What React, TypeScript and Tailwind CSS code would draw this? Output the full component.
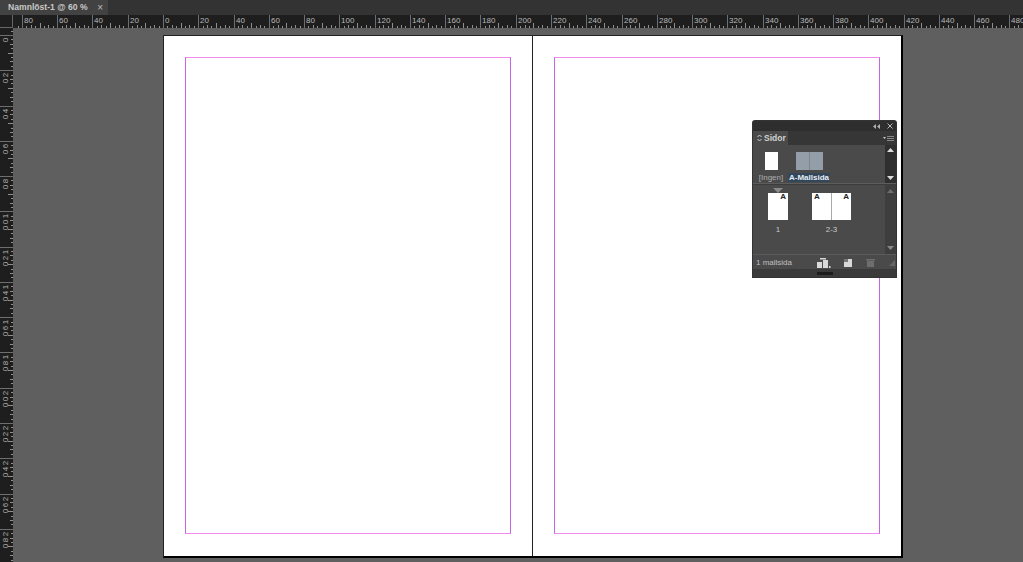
import React from "react";

const SCALE = 1.7635;
const H_ZERO = 163 - 13;
const V_ZERO = 35 - 28;

function tickLength(u: number) {
  if (u % 20 === 0) return 13;
  if (u % 10 === 0) return 5;
  if (u % 5 === 0) return 3;
  return 2;
}

function HorizontalRuler() {
  const ticks = [];
  for (let u = -82.5; u <= 490; u += 2.5) {
    const x = Math.round(H_ZERO + u * SCALE) + 0.5;
    const len = tickLength(u);
    ticks.push(<line key={u} x1={x} x2={x} y1={13 - len} y2={13} stroke={len === 13 ? "#6e6e6e" : "#8f8f8f"} />);
  }
  const labels = [];
  for (let u = -80; u <= 480; u += 20) {
    const x = Math.round(H_ZERO + u * SCALE) + 2;
    labels.push(
      <text key={u} x={x} y={8} fontSize={8} fill="#b8b8b8" fontFamily="Liberation Sans, sans-serif">
        {Math.abs(u)}
      </text>,
    );
  }
  return (
    <svg width={1010} height={13} className="block">
      {ticks}
      {labels}
    </svg>
  );
}

function VerticalRuler() {
  const ticks = [];
  for (let u = -2.5; u <= 300; u += 2.5) {
    const y = Math.round(V_ZERO + u * SCALE) + 0.5;
    const len = tickLength(u);
    ticks.push(<line key={u} y1={y} y2={y} x1={13 - len} x2={13} stroke={len === 13 ? "#6e6e6e" : "#8f8f8f"} />);
  }
  const labels = [];
  for (let u = 0; u <= 280; u += 20) {
    const y = Math.round(V_ZERO + u * SCALE);
    String(u)
      .split("")
      .forEach((d, i) => {
        const cy = y + 5 + i * 6;
        labels.push(
          <text
            key={`${u}-${i}`}
            x={4.500}
            y={cy + 3}
            fontSize={8}
            fontWeight={400}
            fill="#b0b0b0"
            textAnchor="middle"
            fontFamily="Liberation Sans, sans-serif"
            transform={`rotate(-90 4.500 ${cy})`}
          >
            {d}
          </text>,
        );
      });
  }
  return (
    <svg width={13} height={534} className="block">
      {ticks}
      {labels}
    </svg>
  );
}

function PageSheet({ className }: { className: string }) {
  return (
    <div className={`h-full ${className}`}>
      <div className="h-[477px] w-[326px] border border-x-[#c266e6] border-y-[#f08cf0]" />
    </div>
  );
}

function MiniPage({ letter, side, width }: { letter: string; side: "left" | "right"; width: string }) {
  return (
    <div className={`flex h-[27px] ${width} bg-white px-[2px] ${side === "right" ? "justify-end" : "justify-start"}`}>
      <span className="-mt-[1px] text-[8px] font-bold leading-[9px] text-[#222]">{letter}</span>
    </div>
  );
}

function PagesPanel() {
  return (
    <div className="absolute left-[753px] top-[121px] flex h-[156px] w-[143px] flex-col rounded-t-[2px] bg-[#4a4a4a] text-[#d0d0d0] shadow-[0_0_0_1px_#333]">
      <div className="flex h-[10px] items-center justify-end gap-[7px] bg-[#2e2e2e] pr-[3px]">
        <svg width="7" height="5" viewBox="0 0 7 5" fill="#b0b0b0">
          <path d="M3 0v5L0 2.500zM7 0v5L4 2.500z" />
        </svg>
        <svg width="6" height="6" viewBox="0 0 6 6" stroke="#b8b8b8" strokeWidth="1">
          <path d="M0.500 0.500 5.500 5.500M5.500 0.500 0.500 5.500" />
        </svg>
      </div>
      <div className="flex h-[14px] bg-[#363636]">
        <div className="flex w-[35px] items-center gap-[2px] bg-[#4a4a4a] pl-[4px] text-[8.500px] font-bold leading-none">
          <svg width="5" height="8" viewBox="0 0 5 8" fill="none" stroke="#d0d0d0">
            <path d="M0.500 3 2.500 1 4.500 3M0.500 5 2.500 7 4.500 5" />
          </svg>
          <span>Sidor</span>
        </div>
        <div className="ml-auto flex items-center gap-[1px] pr-[2px]">
          <svg width="3" height="3" viewBox="0 0 3 3" fill="#ccc">
            <path d="M0 0h3L1.500 2z" />
          </svg>
          <svg width="7" height="7" viewBox="0 0 7 7" stroke="#888">
            <path d="M0 1.500h7M0 3.500h7M0 5.500h7" />
          </svg>
        </div>
      </div>
      <div className="flex h-[38px]">
        <div className="flex flex-1 pl-[5px] pt-[7px]">
          <div className="flex w-[26px] flex-col items-center">
            <div className="h-[18px] w-[13px] bg-white" />
            <span className="mt-[3px] whitespace-nowrap text-[8px] leading-[9px] text-[#b0b0b0]">[Ingen]</span>
          </div>
          <div className="ml-[5px] flex w-[40px] flex-col items-center">
            <div className="flex h-[18px] w-[27px] gap-[1px] bg-[#7c8792]">
              <div className="flex-1 bg-[#949ea8]" />
              <div className="flex-1 bg-[#949ea8]" />
            </div>
            <span className="mt-[3px] whitespace-nowrap bg-[#33475c] px-[1px] text-[8px] font-bold leading-[9px] text-[#e4ecf4]">A-Mallsida</span>
          </div>
        </div>
        <div className="flex w-[11px] flex-col items-center justify-between bg-[#2f2f2f] py-[3px]">
          <svg width="7" height="4" viewBox="0 0 7 4" fill="#ddd">
            <path d="M3.500 0 7 4H0z" />
          </svg>
          <svg width="7" height="4" viewBox="0 0 7 4" fill="#ddd">
            <path d="M0 0h7L3.500 4z" />
          </svg>
        </div>
      </div>
      <div className="h-[1px] bg-[#5d5d5d]" />
      <div className="flex h-[70px] border-t border-[#3c3c3c]">
        <div className="flex flex-1 pl-[15px] pt-[8px]">
          <div className="relative flex flex-col items-center">
            <svg className="absolute -top-[5px] left-[5px]" width="10" height="5" viewBox="0 0 10 5" fill="#8a8a8a">
              <path d="M0 0h10L5 5z" />
            </svg>
            <MiniPage letter="A" side="right" width="w-[20px]" />
            <span className="mt-[5px] text-[8px] leading-[9px] text-[#c8c8c8]">1</span>
          </div>
          <div className="ml-[24px] flex flex-col items-center">
            <div className="flex gap-[1px] bg-[#aaa]">
              <MiniPage letter="A" side="left" width="w-[19px]" />
              <MiniPage letter="A" side="right" width="w-[19px]" />
            </div>
            <span className="mt-[5px] text-[8px] leading-[9px] text-[#c8c8c8]">2-3</span>
          </div>
        </div>
        <div className="flex w-[11px] flex-col items-center justify-between bg-[#3e3e3e] py-[4px]">
          <svg width="7" height="4" viewBox="0 0 7 4" fill="#6e6e6e">
            <path d="M3.500 0 7 4H0z" />
          </svg>
          <svg width="7" height="4" viewBox="0 0 7 4" fill="#888">
            <path d="M0 0h7L3.500 4z" />
          </svg>
        </div>
      </div>
      <div className="flex h-[15px] items-center border-t border-[#5a5a5a] pl-[3px] pr-[1px] pt-[1px]">
        <span className="w-[61px] text-[8px] leading-none text-[#c0c0c0]">1 mallsida</span>
        <svg width="14" height="10" viewBox="0 0 14 10" fill="#d8d8d8">
          <path d="M0 4h5v6H0zM6 2h5v8H6zM3 0h6v1.500H3zM12 8h1.500v2H12z" />
        </svg>
        <svg className="ml-[13px]" width="8" height="8" viewBox="0 0 8 8" fill="#d8d8d8">
          <path d="M0 0h8v8H0z" />
          <path d="M0 0h4v3H0z" fill="#777" />
        </svg>
        <svg className="ml-[14px]" width="9" height="9" viewBox="0 0 9 9" fill="#6e6e6e">
          <path d="M0 1h9v1.500H0zM1 3h7v6H1z" />
        </svg>
        <svg className="ml-auto" width="6" height="6" viewBox="0 0 6 6" fill="#666">
          <path d="M6 0v6H0z" />
        </svg>
      </div>
      <div className="flex h-[8px] items-center justify-center bg-[#3a3a3a]">
        <div className="h-[3px] w-[16px] bg-[#1c1c1c]" />
      </div>
    </div>
  );
}

export default function App() {
  return (
    <div className="relative flex h-[562px] w-[1023px] flex-col overflow-hidden bg-[#5f5f5f] font-['Liberation_Sans',sans-serif]">
      <div className="flex h-[15px] bg-[#333333]">
        <div className="flex w-[108px] items-center justify-between bg-[#424242] pl-[8px] pr-[5px] text-[8.600px] font-bold leading-none text-[#c8c8c8]">
          <span>Namnlöst-1 @ 60 %</span>
          <span className="text-[10px] font-normal text-[#bdbdbd]">×</span>
        </div>
      </div>
      <div className="flex h-[13px] bg-[#1e1e1e]">
        <div className="w-[13px] border-b border-r border-[#666]" />
        <div className="flex-1 overflow-hidden">
          <HorizontalRuler />
        </div>
      </div>
      <div className="flex flex-1">
        <div className="w-[13px] bg-[#1e1e1e]">
          <VerticalRuler />
        </div>
        <div className="flex-1 pl-[150px] pt-[7px]">
          <div className="flex h-[523px] w-[740px] border-b-[2px] border-r-[2px] border-b-black border-r-black border-l border-t border-l-[#222] border-t-[#222] bg-white">
            <PageSheet className="w-[369px] border-r border-[#222] pl-[21px] pt-[21px]" />
            <PageSheet className="flex-1 pl-[21px] pt-[21px]" />
          </div>
        </div>
      </div>
      <PagesPanel />
    </div>
  );
}
